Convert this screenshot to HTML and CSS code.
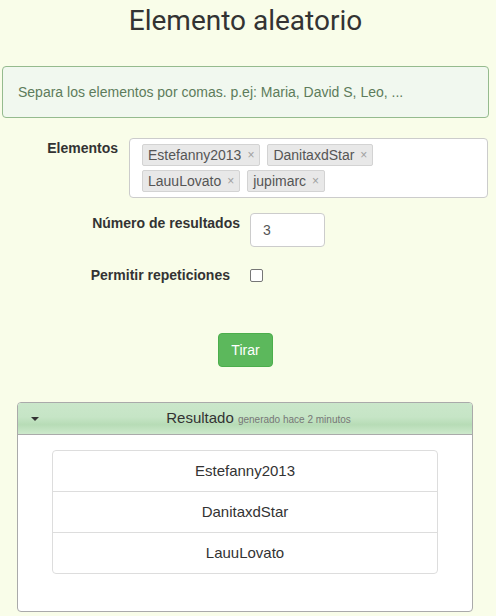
FILE: index.html
```html
<!DOCTYPE html>
<html lang="es">
<head>
<meta charset="utf-8">
<title>Elemento aleatorio</title>
<link rel="stylesheet" href="styles.css">
</head>
<body>
<div class="page">
  <h1 class="title">Elemento aleatorio</h1>
  <div class="alert">Separa los elementos por comas. p.ej: Maria, David S, Leo, ...</div>

  <form class="form">
    <div class="row row-elements">
      <label class="label label-elements">Elementos</label>
      <div class="tags-input">
        <span class="tag">Estefanny2013<span class="x">×</span></span>
        <span class="tag">DanitaxdStar<span class="x">×</span></span>
        <span class="tag">LauuLovato<span class="x">×</span></span>
        <span class="tag">jupimarc<span class="x">×</span></span>
      </div>
    </div>
    <div class="row row-number">
      <label class="label label-number">Número de resultados</label>
      <div class="num-input">3</div>
    </div>
    <div class="row row-check">
      <label class="label label-check">Permitir repeticiones</label>
      <span class="checkbox"></span>
    </div>
    <div class="actions">
      <button type="button" class="btn">Tirar</button>
    </div>
  </form>

  <section class="panel">
    <div class="panel-heading">
      <span class="caret"></span>
      <span class="panel-title">Resultado <small>generado hace 2 minutos</small></span>
    </div>
    <div class="panel-body">
      <ul class="list">
        <li class="item">Estefanny2013</li>
        <li class="item">DanitaxdStar</li>
        <li class="item">LauuLovato</li>
      </ul>
    </div>
  </section>
</div>
</body>
</html>
```

FILE: styles.css
```css
html, body {
  margin: 0;
  padding: 0;
  background: #f9fde9;
}
body {
  font-family: "Liberation Sans", Arial, sans-serif;
  font-size: 14px;
  line-height: 20px;
  color: #333;
}
.page {
  margin-left: 2px;
  width: 487px;
}
.title {
  margin: 0;
  font-family: Roboto, "Liberation Sans", sans-serif;
  font-weight: 400;
  font-size: 28px;
  line-height: 41px;
  text-align: center;
  color: #333;
}
.alert {
  margin-top: 25px;
  padding: 15px;
  border: 1px solid #95bb8e;
  border-radius: 4px;
  background: #f1f8ef;
  color: #5d7c5b;
}
.form {
  margin-top: 20px;
}
.row {
  display: flex;
  align-items: flex-start;
}
.label {
  font-weight: bold;
  text-align: right;
  flex: none;
}
.label-elements { width: 116px; margin-right: 11px; }
.tags-input {
  flex: 1;
  margin-right: 1px;
  background: #fff;
  border: 1px solid #ccc;
  border-radius: 4px;
  padding: 5px 12px 5px 12px;
  display: flex;
  flex-wrap: wrap;
  gap: 4px 7px;
  align-content: flex-start;
}
.tag {
  display: inline-flex;
  align-items: center;
  height: 20px;
  line-height: 20px;
  padding: 0 5px;
  background: #e8e8e8;
  border: 1px solid #d3d3d3;
  border-radius: 2px;
  color: #555;
}
.x {
  margin-left: 6px;
  font-size: 12px;
  line-height: 20px;
  color: #a0a0a0;
}
.row-number { margin-top: 15px; }
.label-number { width: 238px; margin-right: 10px; }
.num-input {
  width: 49px;
  height: 20px;
  padding: 6px 12px;
  background: #fff;
  border: 1px solid #ccc;
  border-radius: 4px;
  color: #555;
}
.row-check { margin-top: 18px; align-items: center; }
.label-check { width: 228px; margin-right: 20px; }
.checkbox {
  width: 11px;
  height: 11px;
  border: 1px solid #767676;
  border-radius: 2px;
  background: #fff;
}
.actions {
  margin-top: 48px;
  display: flex;
  justify-content: center;
}
.btn {
  font-family: "Liberation Sans", Arial, sans-serif;
  font-size: 14px;
  line-height: 20px;
  padding: 6px 12px;
  color: #fff;
  background: #5cb85c;
  border: 1px solid #4cae4c;
  border-radius: 4px;
}
.panel {
  margin: 35px 16px 0 15px;
  border: 1px solid #aaa;
  border-radius: 4px;
  background: #fff;
  overflow: hidden;
}
.panel-heading {
  display: flex;
  align-items: center;
  height: 31px;
  padding-left: 13px;
  border-bottom: 1px solid #aaa;
  background: linear-gradient(to bottom, #cae7ca 0%, #c6e5c6 45%, #b7dcb6 70%, #cde9cc 100%);
}
.caret {
  width: 0;
  height: 0;
  border-left: 4px solid transparent;
  border-right: 4px solid transparent;
  border-top: 4px solid #333;
  margin-right: 6px;
}
.panel-title {
  flex: 1;
  text-align: center;
  font-size: 15px;
  color: #333;
}
.panel-title small {
  font-size: 10px;
  color: #777;
}
.panel-body {
  padding: 15px 34px 37px 34px;
}
.list {
  list-style: none;
  margin: 0;
  padding: 0;
}
.item {
  padding: 10px 15px;
  border: 1px solid #ddd;
  margin-bottom: -1px;
  text-align: center;
  font-size: 15px;
  line-height: 20px;
  color: #333;
}
.item:first-child { border-radius: 4px 4px 0 0; }
.item:last-child { border-radius: 0 0 4px 4px; margin-bottom: 0; }
```
